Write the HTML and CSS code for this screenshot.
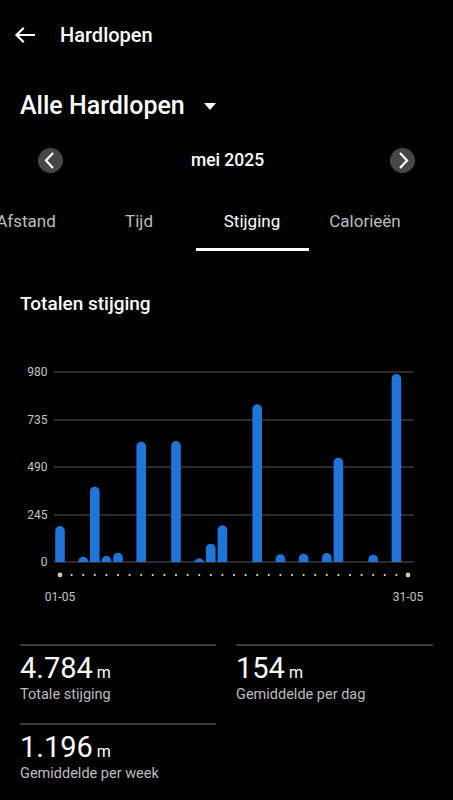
FILE: index.html
```html
<!DOCTYPE html>
<html lang="nl">
<head>
<meta charset="utf-8">
<title>Hardlopen</title>
<link rel="stylesheet" href="styles.css">
</head>
<body>
<div class="screen">
  <header class="topbar">
    <svg class="back" width="22" height="18" viewBox="0 0 22 18"><path d="M2.5 9H21M9.8 1.8L2.5 9l7.3 7.2" fill="none" stroke="#fff" stroke-width="2.2"/></svg>
    <span class="topbar-title">Hardlopen</span>
  </header>

  <div class="filter">
    <span class="filter-label">Alle Hardlopen</span>
    <svg class="caret" width="12" height="7" viewBox="0 0 12 7"><path d="M0 0h12L6 7z" fill="#fff"/></svg>
  </div>

  <div class="period">
    <span class="round-btn"><svg width="25" height="25" viewBox="0 0 25 25"><path d="M15 5L8 12.5 15 20" fill="none" stroke="#fff" stroke-width="2.2"/></svg></span>
    <span class="period-label">mei 2025</span>
    <span class="round-btn"><svg width="25" height="25" viewBox="0 0 25 25"><path d="M10 5l7 7.5L10 20" fill="none" stroke="#fff" stroke-width="2.2"/></svg></span>
  </div>

  <nav class="tabs">
    <div class="tab-track">
      <span class="tab">Afstand</span>
      <span class="tab">Tijd</span>
      <span class="tab active">Stijging</span>
      <span class="tab">Calorieën</span>
    </div>
  </nav>

  <h2 class="section-title">Totalen stijging</h2>

  <svg class="chart" width="453" height="255" viewBox="0 355 453 255">
    <defs><clipPath id="plot"><rect x="0" y="355" width="453" height="207"/></clipPath></defs>
    <g class="grid">
      <line x1="54" y1="372" x2="414" y2="372"/>
      <line x1="54" y1="420" x2="414" y2="420"/>
      <line x1="54" y1="467" x2="414" y2="467"/>
      <line x1="54" y1="515" x2="414" y2="515"/>
      <line x1="54" y1="562" x2="414" y2="562"/>
    </g>
    <g class="ylab">
      <text x="47.5" y="372">980</text>
      <text x="47.5" y="420">735</text>
      <text x="47.5" y="467">490</text>
      <text x="47.5" y="515">245</text>
      <text x="47.5" y="562">0</text>
    </g>
    <g class="bars" clip-path="url(#plot)">
      <rect x="55.2" y="526" width="9.6" height="46" rx="4.8"/>
      <rect x="78.4" y="556.7" width="9.6" height="15.3" rx="4.8"/>
      <rect x="90.0" y="486.7" width="9.6" height="85.3" rx="4.8"/>
      <rect x="101.6" y="556" width="9.6" height="16" rx="4.8"/>
      <rect x="113.2" y="552.7" width="9.6" height="19.3" rx="4.8"/>
      <rect x="136.4" y="441.7" width="9.6" height="130.3" rx="4.8"/>
      <rect x="171.2" y="441" width="9.6" height="131" rx="4.8"/>
      <rect x="194.4" y="558.3" width="9.6" height="13.7" rx="4.8"/>
      <rect x="206.0" y="543.7" width="9.6" height="28.3" rx="4.8"/>
      <rect x="217.6" y="525.3" width="9.6" height="46.7" rx="4.8"/>
      <rect x="252.4" y="404.3" width="9.6" height="167.7" rx="4.8"/>
      <rect x="275.6" y="554.3" width="9.6" height="17.7" rx="4.8"/>
      <rect x="298.8" y="553.7" width="9.6" height="18.3" rx="4.8"/>
      <rect x="322.0" y="553" width="9.6" height="19" rx="4.8"/>
      <rect x="333.6" y="457.7" width="9.6" height="114.3" rx="4.8"/>
      <rect x="368.4" y="554.7" width="9.6" height="17.3" rx="4.8"/>
      <rect x="391.6" y="374" width="9.6" height="198" rx="4.8"/>
    </g>
    <g class="dots">
      <circle class="end" cx="60" cy="575" r="2.4"/>
      <circle cx="71.6" cy="575" r="1.1"/><circle cx="83.2" cy="575" r="1.1"/><circle cx="94.8" cy="575" r="1.1"/>
      <circle cx="106.4" cy="575" r="1.1"/><circle cx="118" cy="575" r="1.1"/><circle cx="129.6" cy="575" r="1.1"/>
      <circle cx="141.2" cy="575" r="1.1"/><circle cx="152.8" cy="575" r="1.1"/><circle cx="164.4" cy="575" r="1.1"/>
      <circle cx="176" cy="575" r="1.1"/><circle cx="187.6" cy="575" r="1.1"/><circle cx="199.2" cy="575" r="1.1"/>
      <circle cx="210.8" cy="575" r="1.1"/><circle cx="222.4" cy="575" r="1.1"/><circle cx="234" cy="575" r="1.1"/>
      <circle cx="245.6" cy="575" r="1.1"/><circle cx="257.2" cy="575" r="1.1"/><circle cx="268.8" cy="575" r="1.1"/>
      <circle cx="280.4" cy="575" r="1.1"/><circle cx="292" cy="575" r="1.1"/><circle cx="303.6" cy="575" r="1.1"/>
      <circle cx="315.2" cy="575" r="1.1"/><circle cx="326.8" cy="575" r="1.1"/><circle cx="338.4" cy="575" r="1.1"/>
      <circle cx="350" cy="575" r="1.1"/><circle cx="361.6" cy="575" r="1.1"/><circle cx="373.2" cy="575" r="1.1"/>
      <circle cx="384.8" cy="575" r="1.1"/><circle cx="396.4" cy="575" r="1.1"/>
      <circle class="end" cx="408" cy="575" r="2.4"/>
    </g>
    <g class="xlab">
      <text x="60" y="597">01-05</text>
      <text x="408" y="597">31-05</text>
    </g>
  </svg>

  <section class="stats">
    <div class="stat">
      <div class="stat-value">4.784<span class="unit">m</span></div>
      <div class="stat-label">Totale stijging</div>
    </div>
    <div class="stat">
      <div class="stat-value">154<span class="unit">m</span></div>
      <div class="stat-label">Gemiddelde per dag</div>
    </div>
    <div class="stat">
      <div class="stat-value">1.196<span class="unit">m</span></div>
      <div class="stat-label">Gemiddelde per week</div>
    </div>
  </section>
</div>
</body>
</html>
```
FILE: styles.css
```css
* { box-sizing: border-box; }
html, body {
  margin: 0;
  padding: 0;
  background: #000;
}
body {
  font-family: Roboto, "Noto Sans", "Liberation Sans", sans-serif;
  color: #fff;
}
.screen {
  width: 453px;
  height: 800px;
  overflow: hidden;
}
.topbar {
  height: 70px;
  display: flex;
  align-items: center;
  padding-left: 14px;
}
.back { display: block; }
.topbar-title {
  margin-left: 24px;
  font-size: 20px;
  font-weight: 500;
  line-height: 24px;
}
.filter {
  margin-top: 21px;
  padding-left: 20px;
  height: 30px;
  display: flex;
  align-items: center;
}
.filter-label {
  font-size: 25px;
  font-weight: 500;
  line-height: 30px;
}
.caret {
  display: block;
  margin-left: 19px;
  margin-top: 1px;
}
.period {
  margin-top: 27px;
  height: 25px;
  padding: 0 38px;
  display: flex;
  align-items: center;
  justify-content: space-between;
}
.round-btn {
  width: 25px;
  height: 25px;
  border-radius: 50%;
  background: #474747;
  display: block;
}
.round-btn svg { display: block; }
.period-label {
  font-size: 17.5px;
  font-weight: 500;
  line-height: 25px;
  margin-left: 2px;
}
.tabs {
  margin-top: 38px;
  overflow: hidden;
}
.tab-track {
  display: flex;
  margin-left: -30.5px;
}
.tab {
  flex: 0 0 113px;
  text-align: center;
  font-size: 17px;
  line-height: 20px;
  color: #bdbdbd;
  padding-bottom: 17px;
  border-bottom: 3px solid transparent;
}
.tab.active {
  color: #fff;
  border-bottom-color: #fff;
}
.section-title {
  margin: 41px 0 0;
  padding-left: 20px;
  font-size: 19px;
  font-weight: 500;
  line-height: 24px;
}
.chart {
  display: block;
  margin-top: 39px;
}
.grid line {
  stroke: #3b3b3b;
  stroke-width: 1.3;
}
.ylab text, .xlab text {
  font-family: Roboto, "Noto Sans", sans-serif;
  font-size: 12px;
  fill: #c4c4c4;
  dominant-baseline: central;
}
.ylab text { text-anchor: end; }
.xlab text { text-anchor: middle; }
.bars rect { fill: #1f76d8; }
.dots circle { fill: #e2e2e2; }
.dots circle.end { fill: #c6c6c6; }
.stats {
  margin-top: 34px;
  padding: 0 20px;
  display: grid;
  grid-template-columns: 196px 197px;
  column-gap: 20px;
  row-gap: 18px;
}
.stat {
  border-top: 2px solid #3c3c3c;
  padding-top: 5px;
}
.stat-value {
  font-size: 29px;
  line-height: 34px;
  height: 34px;
  font-weight: 400;
}
.unit {
  font-size: 16px;
  line-height: 1;
  margin-left: 4px;
}
.stat-label {
  font-size: 14.5px;
  line-height: 20px;
  color: #bdbdbd;
}
```
